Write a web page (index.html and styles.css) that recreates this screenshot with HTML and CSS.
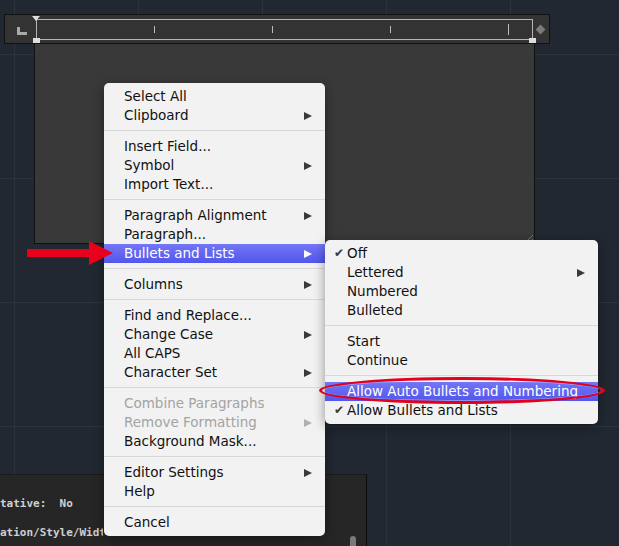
FILE: index.html
```html
<!DOCTYPE html>
<html lang="en">

<head>
    <meta charset="UTF-8">
    <title>Text Editor Context Menu</title>
    <link rel="stylesheet" href="styles.css">
</head>

<body>

    <!-- Text editor: ruler on top, editing box below -->
    <div class="editor">
        <div class="ruler">
            <div class="tab-icon"></div>
            <div class="scale">
                <span class="marker marker-top"></span>
                <span class="marker marker-left"></span>
                <span class="marker marker-right"></span>
                <div class="tick"></div>
                <div class="tick"></div>
                <div class="tick"></div>
                <div class="tick tick-long"></div>
            </div>
            <div class="diamond"></div>
        </div>
        <div class="textbox">
            <svg class="grip" width="8" height="8" viewBox="0 0 8 8">
                <path d="M1 8 L8 1 M5 8 L8 5" stroke="#777" stroke-width="1" fill="none" />
            </svg>
        </div>
    </div>

    <!-- Command line panel -->
    <div class="console">
        <div class="console-line">tative:  No</div>
        <div class="console-line clipped">ation/Style/Width/Columns].</div>
        <div class="scroll-thumb"></div>
    </div>

    <!-- Context menu -->
    <div class="menu main-menu">
        <div class="item">Select All</div>
        <div class="item has-sub">Clipboard</div>
        <div class="separator"></div>
        <div class="item">Insert Field...</div>
        <div class="item has-sub">Symbol</div>
        <div class="item">Import Text...</div>
        <div class="separator"></div>
        <div class="item has-sub">Paragraph Alignment</div>
        <div class="item">Paragraph...</div>
        <div class="item has-sub active">Bullets and Lists</div>
        <div class="separator"></div>
        <div class="item has-sub">Columns</div>
        <div class="separator"></div>
        <div class="item">Find and Replace...</div>
        <div class="item has-sub">Change Case</div>
        <div class="item">All CAPS</div>
        <div class="item has-sub">Character Set</div>
        <div class="separator"></div>
        <div class="item disabled">Combine Paragraphs</div>
        <div class="item has-sub disabled">Remove Formatting</div>
        <div class="item">Background Mask...</div>
        <div class="separator"></div>
        <div class="item has-sub">Editor Settings</div>
        <div class="item">Help</div>
        <div class="separator"></div>
        <div class="item">Cancel</div>
    </div>

    <!-- Bullets and Lists submenu -->
    <div class="menu sub-menu">
        <div class="item checked">Off</div>
        <div class="item has-sub">Lettered</div>
        <div class="item">Numbered</div>
        <div class="item">Bulleted</div>
        <div class="separator"></div>
        <div class="item">Start</div>
        <div class="item">Continue</div>
        <div class="separator"></div>
        <div class="item active">Allow Auto Bullets and Numbering</div>
        <div class="item checked">Allow Bullets and Lists</div>
    </div>

    <!-- Annotations -->
    <svg class="red-arrow" width="90" height="28" viewBox="0 0 90 28">
        <polygon points="0,9 62,9 62,1 86,13 62,25 62,17 0,17" fill="#e8001c" />
    </svg>
    <div class="red-ring"></div>

</body>

</html>
```

FILE: styles.css
```css
/* Page / drawing area */
body {
    margin: 0;
    width: 619px;
    height: 546px;
    overflow: hidden;
    position: relative;
    font-family: 'DejaVu Sans', 'Liberation Sans', sans-serif;
    background-color: #212831;
    background-image:
        linear-gradient(to right, #2c333d 1px, transparent 1px),
        linear-gradient(to bottom, #2c333d 1px, transparent 1px);
    background-size: 124px 124px;
    background-position: 14px 54px;
}

/* Editor window */
.editor {
    position: absolute;
    left: 4px;
    top: 14px;
    width: 546px;
}

.ruler {
    display: flex;
    align-items: center;
    height: 28px;
    background-color: #333;
    border: 1px solid #111;
}

.tab-icon {
    width: 10px;
    height: 8px;
    margin: 4px 9px 0 12px;
    border-left: 3px solid #aaa;
    border-bottom: 3px solid #aaa;
    box-sizing: border-box;
}

.scale {
    position: relative;
    display: flex;
    align-items: center;
    width: 497px;
    height: 21px;
    border: 1px solid #b4b4b4;
    box-sizing: border-box;
}

.tick {
    width: 1px;
    height: 7px;
    margin-left: 117px;
    background-color: #bbb;
}

.tick-long {
    height: 11px;
}

.marker {
    position: absolute;
    width: 0;
    height: 0;
}

.marker-top {
    left: -5px;
    top: -4px;
    border-left: 4px solid transparent;
    border-right: 4px solid transparent;
    border-top: 5px solid #ddd;
}

.marker-left,
.marker-right {
    bottom: -4px;
    width: 7px;
    height: 5px;
    background-color: #ddd;
}

.marker-left {
    left: -4px;
}

.marker-right {
    right: -4px;
}

.diamond {
    width: 7px;
    height: 7px;
    margin-left: 4px;
    background-color: #7a7a7a;
    transform: rotate(45deg);
}

.textbox {
    position: relative;
    width: 499px;
    height: 199px;
    margin-left: 30px;
    margin-top: -1px;
    background-color: #393939;
    border: 1px solid #111;
}

.grip {
    position: absolute;
    right: 1px;
    bottom: 1px;
}

/* Command line panel */
.console {
    position: absolute;
    left: 0;
    top: 474px;
    width: 367px;
    height: 72px;
    background-color: #262626;
    border-top: 1px solid #1a1a1a;
    border-right: 1px solid #0c0c0c;
    padding-top: 22px;
    box-sizing: border-box;
}

.console-line {
    height: 29px;
    font-family: 'DejaVu Sans Mono', 'Liberation Mono', monospace;
    font-weight: bold;
    font-size: 11px;
    color: #cfcfcf;
    white-space: pre;
}

.console-line.clipped {
    width: 103px;
    overflow: hidden;
}

.scroll-thumb {
    position: absolute;
    left: 350px;
    top: 61px;
    width: 6px;
    height: 14px;
    border-radius: 3px;
    background-color: #7a7a7a;
}

/* Menus */
.menu {
    position: absolute;
    padding: 4px 0;
    background-color: #f2f2f2;
    border-radius: 5px;
    box-shadow: 0 3px 12px rgba(0, 0, 0, 0.4);
    font-size: 13.5px;
    color: #111;
}

.main-menu {
    left: 104px;
    top: 83px;
    width: 221px;
}

.sub-menu {
    left: 325px;
    top: 240px;
    width: 273px;
}

.item {
    position: relative;
    display: flex;
    align-items: center;
    justify-content: space-between;
    height: 19px;
    line-height: 19px;
    padding: 0 13px 0 20px;
    white-space: nowrap;
}

.sub-menu .item {
    padding-left: 22px;
}

.item.has-sub::after {
    content: "";
    width: 0;
    height: 0;
    border-left: 8px solid #3a3a3a;
    border-top: 4.5px solid transparent;
    border-bottom: 4.5px solid transparent;
}

.item.checked::before {
    content: "\2714";
    position: absolute;
    left: 9px;
    font-size: 12px;
    color: #3a3a3a;
}

.item.active {
    color: #fff;
    background: linear-gradient(#7376f6, #5256ec);
}

.item.active.has-sub::after {
    border-left-color: #fff;
}

.item.disabled {
    color: #a3a3a3;
}

.item.disabled.has-sub::after {
    border-left-color: #b0b0b0;
}

.separator {
    height: 1px;
    margin: 5px 0 6px;
    background-color: #d8d8d8;
}

/* Annotations */
.red-arrow {
    position: absolute;
    left: 27px;
    top: 240px;
}

.red-ring {
    position: absolute;
    left: 319px;
    top: 377px;
    width: 280px;
    height: 21px;
    border: 3px solid #e3001b;
    border-radius: 50%;
    box-shadow: inset 0 0 0 1px rgba(255, 255, 255, 0.35);
}
```
